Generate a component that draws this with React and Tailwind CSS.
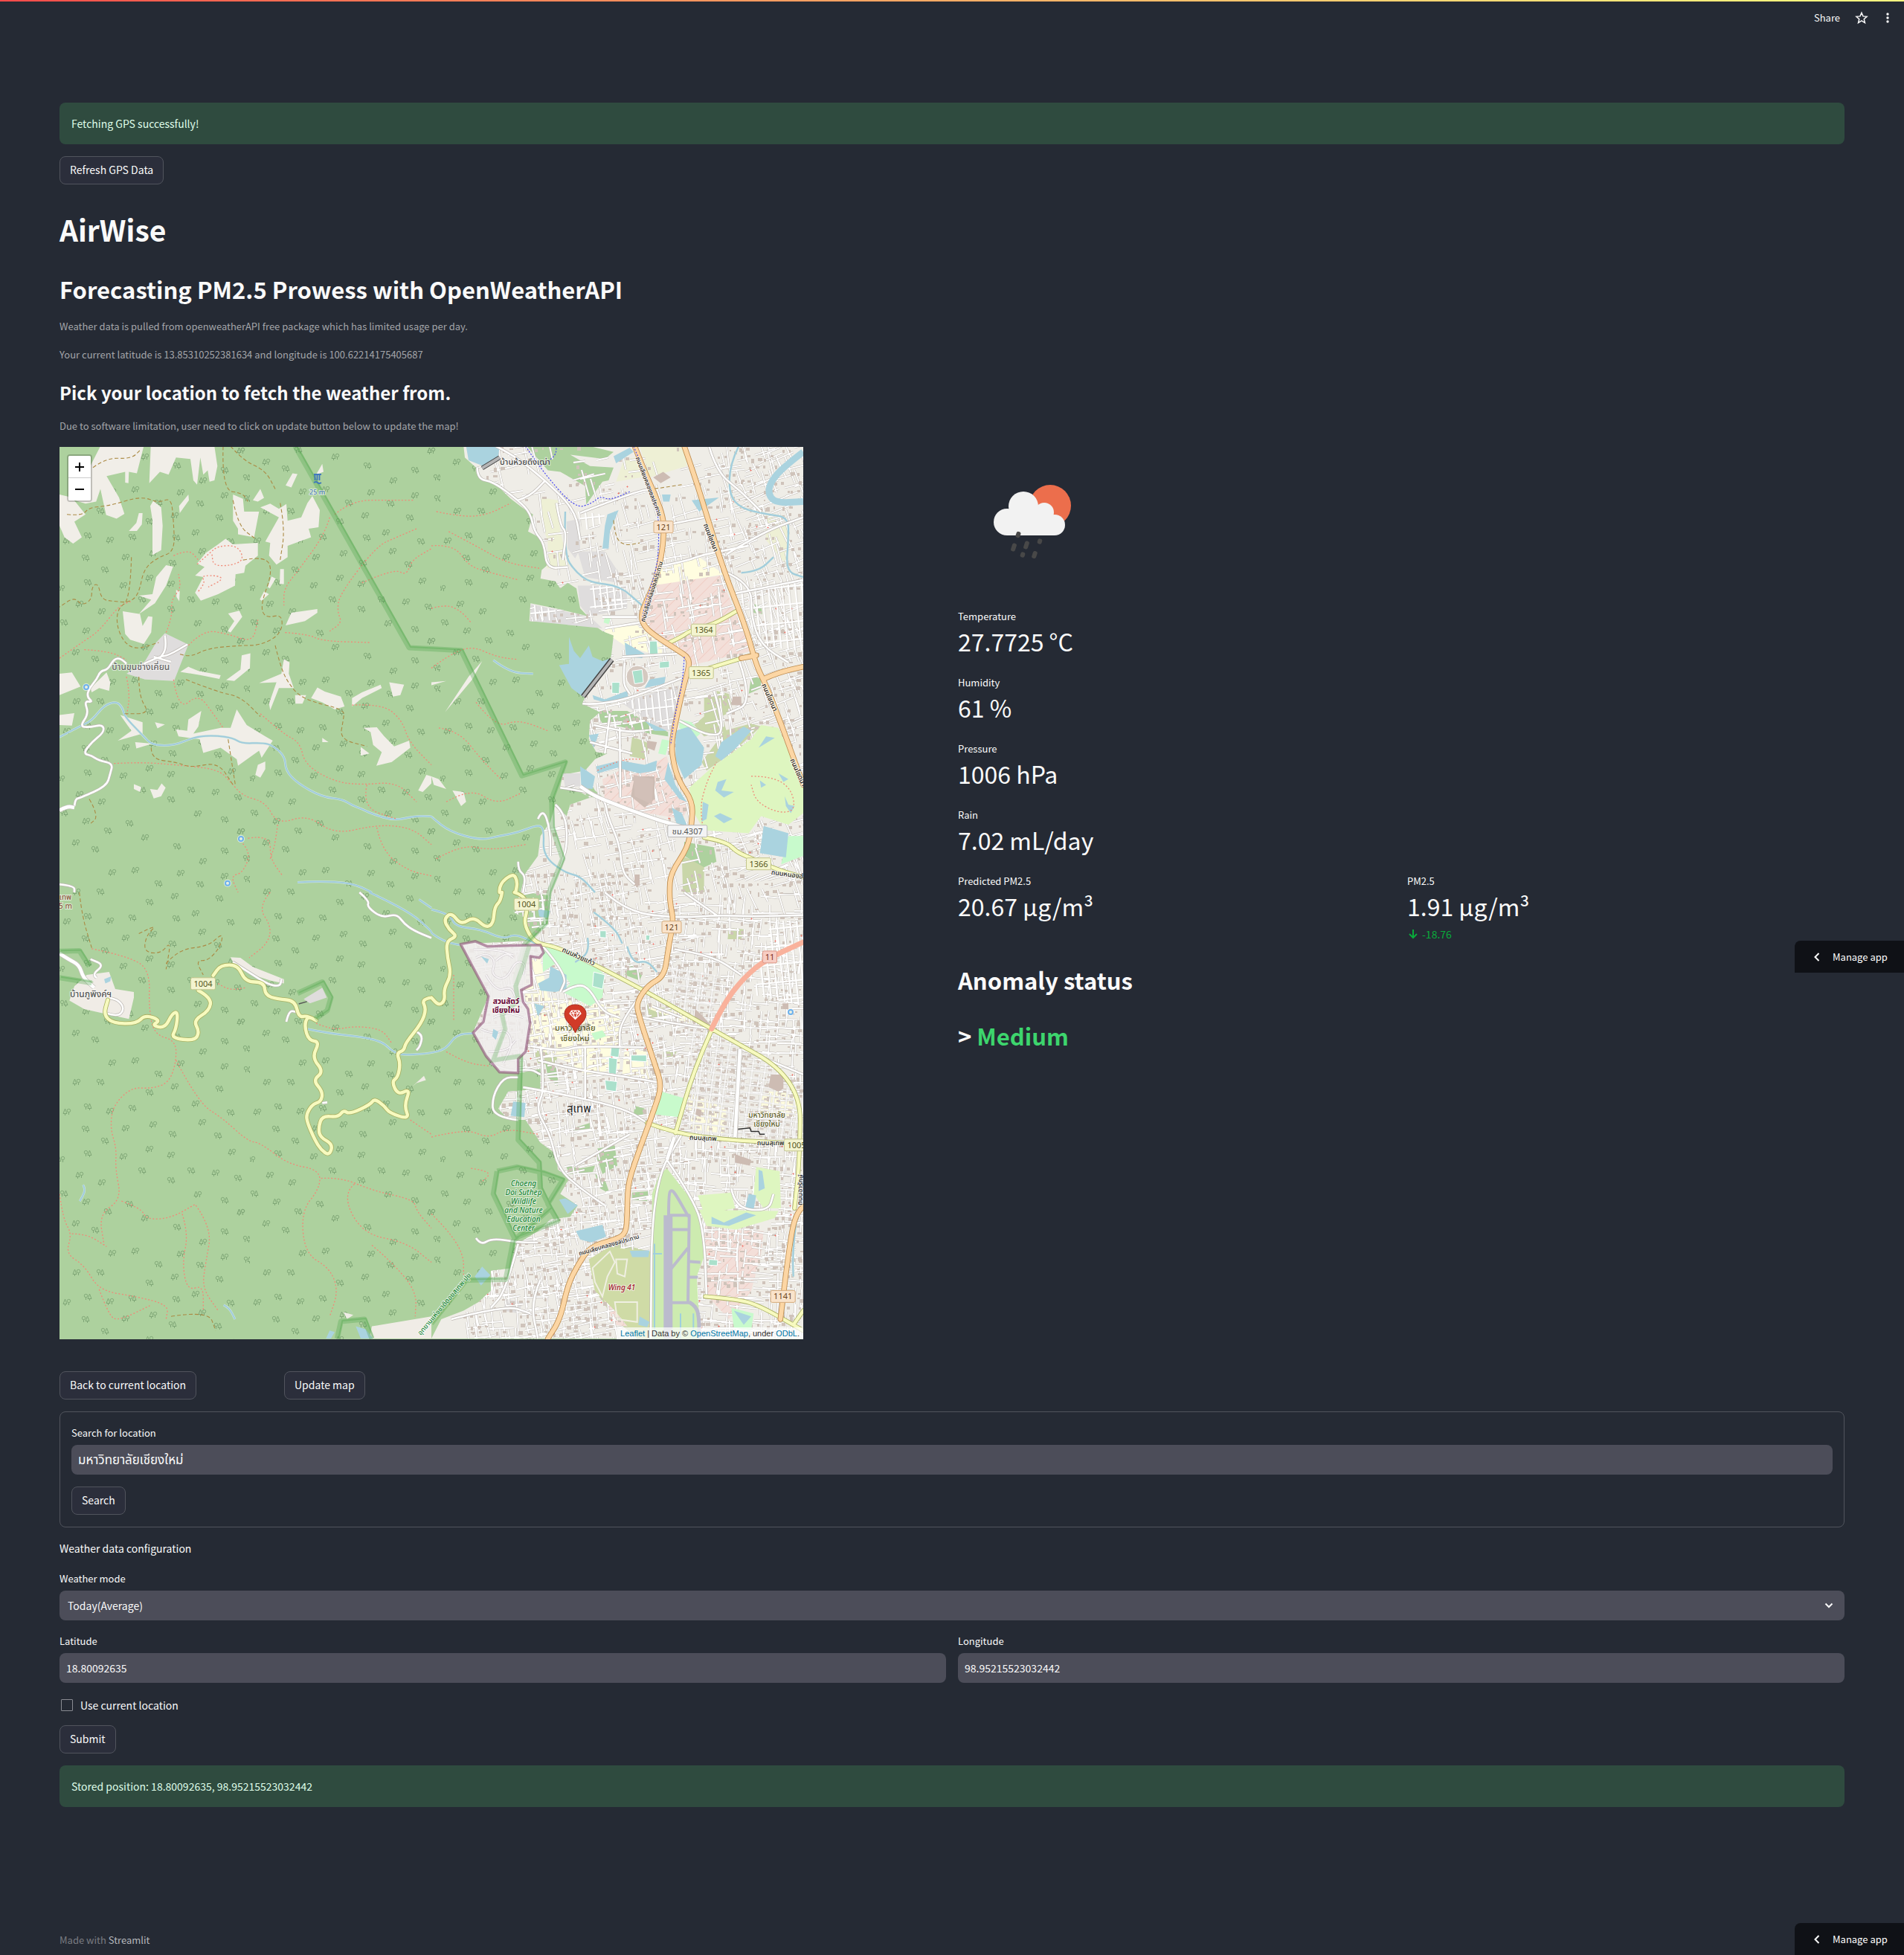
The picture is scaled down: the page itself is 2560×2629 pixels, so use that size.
import { useState } from "react";

/* ---------- map geometry ---------- */

// Map features are surveyed on four sheets; every sheet covers 500 x 600 px of the map.
const SHEETS = { nw: [0, 0], ne: [500, 0], sw: [0, 600], se: [500, 600] };
const toPx = (s, x, y) => [
  Math.round((SHEETS[s][0] + x / 3) * 10) / 10,
  Math.round((SHEETS[s][1] - 1 + y / 2.6133) * 10) / 10,
];

function points(text) {
  let sheet = "nw";
  const out = [];
  for (const t of text.trim().split(/\s+/)) {
    if (SHEETS[t]) sheet = t;
    else {
      const [x, y] = t.split(",").map(Number);
      out.push(toPx(sheet, x, y));
    }
  }
  return out;
}

const poly = (text) =>
  text
    .split("|")
    .map((p) => "M" + points(p).map((c) => c.join(" ")).join("L") + "Z")
    .join("");

const line = (text) =>
  text
    .split("|")
    .map((part) => {
      const p = points(part);
      let d = `M${p[0].join(" ")}`;
      for (let i = 1; i < p.length - 1; i++) {
        const mx = (p[i][0] + p[i + 1][0]) / 2;
        const my = (p[i][1] + p[i + 1][1]) / 2;
        d += `Q${p[i].join(" ")} ${mx} ${my}`;
      }
      return d + `L${p[p.length - 1].join(" ")}`;
    })
    .join("");

const straight = (text) =>
  text
    .split("|")
    .map((p) => "M" + points(p).map((c) => c.join(" ")).join("L"))
    .join("");

const URBAN = poly(
  "ne 130,0 135,40 180,75 195,115 250,125 320,185 380,225 410,240 390,300 435,320 460,360 465,420 445,435 440,465 500,475 520,500 550,480 585,500 600,570 630,597 500,570 400,552 395,615 650,625 690,650 735,665 725,740 620,880 610,905 680,935 640,965 635,1030 665,1075 710,1080 660,1100 620,1140 560,1150 530,1150 520,1200 570,1200 640,1235 560,1260 545,1300 500,1260 480,1320 440,1370 430,1440 380,1500 360,1568 se 360,0 330,70 380,90 410,170 118,182 230,365 168,493 275,632 350,635 440,620 440,690 310,700 270,760 310,800 380,800 440,880 505,920 510,975 560,1000 520,1060 590,1100 560,1140 480,1150 430,1190 340,1240 330,1320 240,1330 240,1400 190,1440 130,1470 40,1500 0,1568 1500,1568 1500,0 ne 1500,1568 1500,0"
);

const CLEARINGS = poly(
  "nw 165,0 340,0 312,95 280,90 278,130 265,128 265,90 190,105 240,180 262,238 230,255 188,242 165,150 148,195 105,202 60,190 130,60|nw 368,0 625,0 637,70 625,120 605,125 598,85 580,100 568,40 555,135 540,120 528,45 470,40 440,100 405,90 362,130|nw 0,170 50,180 105,240 60,265 90,320 55,342 20,320 0,280|nw 335,235 332,275 312,298 280,298 310,270 320,235|nw 378,192 410,215 416,280 410,365 375,383 375,260 366,210|nw 520,170 522,190 485,235 482,210|nw 430,418 458,423 430,490 385,552 320,590 370,540 320,525 375,520 390,460|nw 255,580 325,590 335,632 358,598 375,600 370,655 340,695 285,680 265,660|nw 700,170 740,185 745,230 805,230 785,320 720,310 720,290 700,262|nw 810,150 825,182 800,195 780,190|nw 810,215 850,202 885,220 915,203 920,262 975,250 1000,200 1020,175 1050,225 1045,285 1005,290 1015,320 920,350 920,390 875,416 845,385 850,340 830,335 885,250|nw 590,375 640,345 670,325 700,345 800,340 800,385 750,420 745,445 710,450 708,490 640,520 570,543 547,515 580,460 547,455 585,425 555,412|nw 940,95 960,98 935,145 912,138|nw 1060,62 1065,90 1035,100|nw 890,432 905,432 905,485 888,485|nw 855,458 872,465 848,500 840,495|nw 825,510 845,520 815,543 808,538|nw 680,588 725,578 737,600 690,655 678,650 705,615|nw 935,585 1040,572 1040,585 990,615 912,630|nw 470,505 485,510 483,545 472,530|nw 735,735 770,728 768,780 705,825 672,822 730,785|nw 487,793 520,775 560,790 650,805 645,818 570,805|nw 905,748 928,760 925,800 945,850 885,850 850,928 845,905 875,830 805,832 895,800|nw 950,875 995,875 980,905 952,905|nw 0,800 50,795 85,845 0,875|nw 0,945 60,938 50,982 0,980|nw 125,850 190,795 205,830 200,860 160,850 130,865|nw 715,925 755,980 830,1020 860,1035 815,1095 805,1070 720,1123 715,1100 650,1060 580,1078 565,1030 480,1020 470,995 515,1000 520,960 572,930 560,985 540,1010 650,990 690,990|nw 245,945 335,970 335,1010 235,1035 290,1000|nw 305,1040 375,1045 310,1062|nw 385,970 425,978 395,992|nw 830,1108 830,1135 810,1165 790,1155 800,1120|nw 1015,885 1040,848 1070,862 1135,880 1150,915 1110,925 1060,900|nw 1180,885 1220,865 1295,838 1300,850 1220,885 1180,915|nw 1330,830 1390,838 1375,875 1345,880|nw 1225,990 1280,988 1310,1020 1350,1055 1410,1035 1415,1060 1340,1110 1278,1123 1300,1075 1265,1050 1255,1005|nw 1215,1057 1250,1080 1215,1088|nw 1060,1025 1085,1040 1060,1040|nw 365,1205 395,1208 412,1185 428,1200 410,1230 380,1238|nw 300,1188 330,1198 325,1215 300,1205|nw 1480,1155 1500,1160 1500,1185 1465,1215 1447,1210|ne 205,755 165,820 55,935 150,810|ne 0,830 60,825 0,840|ne 85,1210 130,1215 140,1250 120,1265|ne 0,1160 30,1170 60,1205 10,1190"
);

const VILLAGES = poly(
  "nw 425,657 520,697 462,825 345,820 270,800 345,755 390,690|ne 400,555 640,600 690,640 400,615|ne 590,490 790,490 790,570 690,590 630,595 600,560|ne 545,265 600,255 600,360 580,395 550,360|ne 590,370 700,370 760,450 750,480 620,460|ne 765,900 1000,840 970,1000 930,1000|ne 530,1150 600,1150 600,1195 540,1200|sw 985,375 1060,335 1078,370 1010,390|se 300,1430 370,1440 350,1480 290,1470"
);

const PALE_SITES = poly(
  "sw 60,330 110,290 200,280 225,340 300,350 300,370 280,445 200,430 100,410 40,380|sw 690,228 730,230 780,262 905,305 905,320 850,310 780,290 700,245|sw 1420,685 1470,645 1478,660 1440,670|sw 1145,1475 1185,1485 1160,1500|sw 1260,1525 1500,1490 1500,1568 1250,1568"
);

const WATER = poly(
  "ne 555,670 575,720 600,745 635,700 650,740 690,755 725,745 610,880 565,850 515,770 555,765|ne 780,690 860,730 850,745 785,740|ne 985,1000 1040,985 1100,1060 1090,1120 1020,1170 985,1100|ne 1340,1335 1440,1360 1430,1445 1325,1430|ne 140,0 275,0 270,35 210,70 150,50|ne 710,240 755,225 720,300 715,360 690,360 700,280|ne 600,1125 660,1160 650,1205 605,1200|ne 665,1125 760,1105 860,1120 910,1105 905,1140 840,1150 750,1130 670,1150|ne 650,875 700,890 790,860 795,885 720,905 655,890|ne 880,820 945,810 940,835 860,850|ne 1170,1040 1260,985 1290,1000 1230,1060 1170,1105 1145,1090|ne 635,1015 675,1010 655,1060|ne 735,35 800,5 815,20 745,60|ne 930,170 965,170 960,195 935,195|ne 1050,190 1160,180 1080,230|ne 1155,1180 1190,1170 1170,1210 1220,1215 1180,1235 1145,1210|ne 1095,1250 1118,1260 1110,1310 1090,1320|ne 1140,1300 1165,1290 1215,1310 1180,1325|ne 1350,1020 1385,1025 1320,1060|ne 1400,1150 1440,1170 1420,1180|ne 1325,1175 1350,1190 1330,1200|ne 1425,1230 1440,1260 1465,1265 1450,1290 1430,1265|ne 860,965 950,1000 900,1000|ne 955,1110 985,1190 1030,1250 1000,1240 940,1170|ne 970,1270 1010,1290 1030,1330 990,1330|se 480,260 545,290 545,340 500,350 440,345 430,320 475,300|se 415,390 455,400 430,435|se 330,735 380,740 375,790 320,785|se 583,1190 690,1168 705,1210 645,1230 600,1220|se 515,1080 540,1075 590,1100 550,1130|se 430,60 480,65 470,90 435,85|se 1280,1060 1310,1065 1300,1115 1265,1110|se 205,1315 238,1345 200,1382 175,1350|se 250,480 270,490 260,518 245,505|se 800,1260 880,1258 875,1282 810,1282|se 840,1490 880,1510 870,1528 835,1520|se 1130,1140 1180,1160 1270,1125 1310,1135 1200,1172 1130,1165|se 1220,1470 1290,1490 1260,1520|se 1320,975 1335,980 1345,1040 1320,1050|se 200,225 232,235 225,250|sw 180,305 208,295 205,312 185,320|sw 1195,1525 1235,1535 1265,1568 1215,1568|sw 1090,1540 1110,1545 1095,1568 1075,1568"
);

const STREAMS = line(
  "nw 0,1022 80,985 130,965 180,910 230,897 255,920 262,950 340,1020 372,1050 460,1053 550,1020 630,1017 700,1025 735,1045 820,1042 860,1052 910,1090 912,1140 960,1185 1060,1233 1140,1240 1180,1262 1220,1275 1260,1292 1350,1316 1430,1300 1500,1300 ne 0,1303 75,1355 200,1385 270,1370 350,1358 430,1330 455,1345 450,1440 540,1500 600,1510 660,1568|nw 960,1533 1040,1528 1180,1535 1260,1568|sw 1250,0 1400,60 1500,135 se 0,145 60,175 115,185|sw 1000,480 1080,495 1290,515 1350,565 1400,572 1500,565 se 60,550 100,500 170,495|se 0,60 75,75 95,120 200,130 290,165 340,145 420,180|ne 250,752 315,795 410,800|sw 1450,25 1500,55|sw 95,1028 107,1045 82,1085|sw 662,1450 685,1460 708,1500|se 630,160 640,210 580,245|se 655,70 740,125 770,180|se 790,190 810,250 870,240 910,280|ne 1240,0 1205,60 1200,170 1250,220 1360,240 1440,250 1440,330 1430,440 1500,460|ne 540,230 535,380 580,440 640,480 760,490 850,560|se 1460,1350 1455,1280 1475,1130|ne 1250,445 1320,440 1380,390"
);

const GOLF = poly(
  "ne 1330,980 1400,990 1450,1090 1500,1200 1500,1290 1440,1330 1330,1300 1280,1360 1100,1350 1060,1290 1040,1200 1130,1130 1290,1030|se 1310,965 1405,980 1410,1110 1340,1110 1300,1060|se 1080,1115 1400,1120 1385,1145 1230,1185 1110,1172|se 1075,1065 1210,1055 1225,1110 1100,1130"
);
const MILITARY = poly(
  "ne 890,490 1165,455 1290,720 1050,770 1000,715 855,630 850,580|se 1095,1165 1160,1185 1340,1190 1330,1270 1290,1400 1200,1500 1110,1415|se 680,1400 830,1440 830,1530 740,1520|ne 690,1170 780,1130 820,1150 950,1090 980,1200 1040,1270 1010,1310 870,1290 700,1245"
);
const CREAM = poly(
  "se 400,240 440,230 470,370 640,390 760,400 760,620 620,640 560,600 400,540 395,400 365,350|se 780,540 870,560 880,660 770,640|ne 920,430 1080,390 1180,450 910,490|ne 700,640 830,630 930,700 930,740 780,700 700,655|se 1030,700 1190,760 1180,850 1040,830|se 1320,700 1480,700 1480,790 1330,780|se 870,390 1060,440 1040,460 880,410|nw 445,748 468,748 460,795 440,790"
);
const PARKS = poly(
  "se 450,190 500,190 660,260 700,290 690,370 640,400 530,350 560,320 500,250 450,280|se 930,700 1025,725 1000,790 895,780|ne 1000,960 1050,970 1085,1010 1060,1030 1000,990|ne 930,1030 960,1035 945,1085 915,1080|ne 1440,1370 1500,1370 1500,1440 1410,1470|se 1210,1460 1300,1480 1290,1540 1220,1530|ne 700,600 725,600 715,625 695,620|se 645,495 690,485 705,505 660,520"
);
const PITCHES = poly(
  "se 715,580 750,585 745,640 715,635|se 700,660 750,665 745,700 705,695|se 725,545 760,545 755,580 722,575|se 805,572 868,572 868,595 805,592|ne 880,685 910,685 915,735 880,730|ne 920,758 960,755 960,778 920,780|ne 728,830 760,830 758,870 728,868|ne 810,790 850,785 855,830 820,835|se 655,280 700,290 690,340 650,330|se 1120,1290 1155,1292 1153,1312 1118,1310|se 865,150 882,150 880,168 865,168|se 680,135 705,135 705,160 680,158"
);
const MEADOW = poly(
  "ne 1100,870 1150,880 1190,1000 1100,1020 1060,980 1100,950|ne 1150,860 1200,870 1215,930 1170,950|ne 1180,1000 1290,975 1330,985 1210,1080 1110,1140 1090,1110 1150,1040|ne 810,1020 880,1045 860,1100 800,1090|se 870,395 970,410 940,455 880,440|se 935,560 990,560 975,580 935,578|ne 1010,1440 1100,1470 1100,1568 1015,1568|se 1200,125 1260,130 1250,165 1195,165|se 410,550 510,570 500,610 430,600|se 640,1290 740,1230 880,1262 885,1568 830,1568 740,1500 660,1400"
);
const GROVES = poly(
  "ne 385,0 640,0 735,20 700,45 560,30 640,70 735,75 715,120 690,125 625,205 620,140 520,90 470,85|ne 660,930 790,930 860,965 955,1005 955,1020 880,1010 760,985 690,975|ne 1290,810 1330,815 1330,850 1280,870|ne 1020,1390 1140,1410 1150,1460 1100,1480 1020,1440|ne 1300,555 1330,560 1335,590 1300,585|ne 780,1150 820,1145 800,1190 765,1180|se 800,250 850,290 840,310 780,290|se 540,960 600,970 660,960 650,985 560,990|se 670,900 740,890 750,960 690,990 670,940|se 660,990 700,1010 720,1060 680,1040|se 570,830 640,810 640,830 580,850|se 1100,740 1110,800 1050,830 1070,780|se 810,1055 880,1050 870,1085 810,1080|se 820,750 860,760 850,790 815,785|ne 640,1180 660,1210 700,1240 620,1230|se 380,0 470,10 470,110 400,170 340,160 300,120 330,50|se 460,600 510,620 510,680 470,650"
);
const FARM = poly(
  "ne 445,180 510,190 520,300 555,420 465,430 470,340 440,250|ne 840,0 1030,0 1030,70 880,110|ne 1345,240 1440,280 1435,420 1350,330|nw 330,875 350,880 372,912 360,912 332,890|sw 1260,1525 1500,1490 1500,1568 1270,1568|ne 775,50 840,35 845,110 745,125"
);
const AIRFIELD = poly("se 950,970 1040,1070 1090,1150 1100,1280 1070,1350 1085,1568 888,1568 890,1060 920,990");
const RETAIL = poly(
  "se 1370,640 1420,640 1420,690 1400,700 1360,685|se 1225,920 1290,940 1285,960 1225,950|se 1065,410 1100,440 1130,470 1060,440|ne 820,1160 900,1160 900,1240 860,1270 805,1230|ne 935,90 965,110 925,130 895,110|ne 870,1035 910,1040 900,1070 870,1060|ne 1215,880 1250,880 1250,910 1210,910|se 1415,390 1440,390 1440,410 1420,410|ne 820,1505 840,1505 840,1545 818,1545|se 1070,760 1090,765 1085,790 1065,780"
);
const ZOO = poly(
  "se 118,182 178,172 225,190 320,187 440,185 453,212 435,230 400,225 405,325 362,343 370,385 390,410 398,460 380,560 350,585 350,635 275,632 220,575 168,493 210,455 230,365"
);
const ZOO_PATHS = line(
  "se 180,230 220,210 260,240 240,290 300,310 340,240 380,250 370,290|se 220,290 260,350 320,330 340,370|se 250,440 300,420 370,440|se 200,480 250,500 300,480 330,530 290,600|se 170,200 260,200 330,220|se 230,560 300,560 340,520|se 260,240 300,210 330,230"
);

const PARK_EDGE = straight(
  "nw 950,0 1410,708 1500,712 ne 120,718 365,1158 540,1110 485,1240 488,1340 530,1450 475,1568 se 460,110 375,185 340,300 345,390 285,430 290,480 250,590 360,575 350,870 435,950 440,1040 480,1110 330,1225 300,1360 140,1363 0,1515|se 265,980 345,965 450,985 530,1010 470,1095 510,1155 335,1215 250,1060 265,980|sw 960,355 1060,315 1095,370 1080,415 1030,445|sw 0,207 80,205 120,260|sw 0,300 130,318|sw 1120,1568 1135,1508 1230,1500 1260,1568"
);

const TRAILS_RED = line(
  "nw 430,655 455,600 450,540 490,500 480,450|nw 555,415 600,380 640,350 720,350 745,400 690,420 620,420 615,380|nw 560,510 590,480 570,455 640,455 660,468 600,495|nw 460,385 520,360 560,400|nw 1090,250 1070,310 960,440 905,500 905,560|nw 1110,240 1180,190 1330,190 1430,190|nw 1440,290 1360,320 1280,350 1130,520 1120,580 1140,620 1090,650|nw 1220,480 1350,430 1400,455 1420,400 1500,360|nw 0,745 90,690 160,650 240,560 290,545|nw 100,715 200,720 270,750|nw 520,700 580,645 680,660 780,690 800,610|nw 910,655 1000,660 1060,685 1250,690|nw 270,810 285,870 270,950|nw 460,820 480,930 560,870 620,940 660,990|nw 220,1115 330,1110 470,1120 640,1135 690,1180 740,1230 830,1250 880,1330 1000,1295 1110,1365 1280,1330 1420,1340 1500,1400|nw 810,940 900,1010 970,1040 990,1120 1110,1180 1220,1190 1360,1180 1440,1250|nw 1180,910 1300,905 1380,960 1410,1040 1500,1120|nw 720,1380 775,1420 740,1500 690,1510 720,1568|nw 760,1378 850,1365 850,1450 900,1510|nw 880,1330 870,1400 850,1450|nw 1240,1190 1220,1270 1360,1310|nw 1280,1340 1300,1420 1400,1490 1500,1510|sw 130,198 310,230 365,290 360,400 380,500 470,520 470,600 440,670 370,690 290,685 215,750 205,830 230,900 225,970 250,1080 160,1130 180,1240|sw 470,590 560,740 660,795 760,875 810,880 920,955 1050,975 1050,1040 975,1120 990,1270 1090,1320 1125,1400 1090,1490|sw 640,320 680,345 750,335|sw 850,0 800,50 855,120 840,180 765,230|sw 1035,460 1100,485 1190,470 1300,480 1340,530|sw 1055,1005 1130,1000 1270,1050 1430,1080 1440,1120 1500,1180|sw 1190,1025 1140,1060 1220,1200 1400,1230 1500,1300|sw 1260,1240 1330,1290 1440,1400 1435,1490|sw 0,1060 15,1150 50,1200 25,1270 100,1310 160,1400 310,1420 440,1450 430,1500|sw 50,1200 110,1200 190,1245|sw 250,1085 330,1110 350,1150 450,1145 550,1095|sw 495,1130 520,1200 495,1300 515,1400 580,1380 580,1468|sw 550,1100 615,1180 590,1300 575,1390 640,1470|sw 160,1395 200,1490 240,1505 370,1450|sw 1415,800 1500,850|ne 0,570 60,555 120,580 160,620|ne 20,230 130,250 230,240 320,200|ne 0,350 90,345 150,420 220,440 350,470|ne 70,300 180,350 300,410 440,430|ne 0,780 60,740 160,700 260,740 350,750|ne 180,900 260,990 350,960 470,1000|ne 30,990 110,1000 200,1100 280,1170|ne 60,1250 160,1200 260,1260 360,1220|ne 20,1450 120,1400 240,1420 380,1400|se 0,860 140,830 230,865 300,830 430,850|se 90,290 90,450|se 160,970 250,980 200,1020|se 0,1130 60,1180 130,1270 130,1350|se 60,560 140,600 230,610|ne 1100,1360 1080,1280 1110,1180 1150,1110|ne 1290,1160 1370,1160 1450,1200 1470,1280 1400,1290 1310,1250 1290,1190|ne 670,1140 760,1100 860,1100"
);

const TRAILS_BROWN = line(
  "nw 135,75 190,40 290,45 330,10|nw 30,240 90,245 120,215 200,210 330,175 400,200 450,180 460,260 465,370 400,390 340,430 320,520 280,550 220,545 170,540 155,480 130,495 130,540 90,560 60,530 0,565|nw 290,390 285,540 235,570 230,630 260,690 310,715 400,690|nw 660,0 655,155 740,165 760,195|nw 690,0 740,50 830,85 870,150|nw 700,190 720,280 790,325|nw 890,200 910,290 890,400|nw 740,400 830,385 860,440 810,560 830,605 900,590 895,660 810,700 730,700 600,710 530,740 480,730|nw 320,810 320,880 365,940 260,940|nw 510,820 640,865 730,880 810,950|nw 870,700 890,770 920,830 980,890 1150,925 1145,960 1130,1030 1240,1055|nw 370,1060 370,1100 470,1110 530,1130 640,1110 700,1190|nw 680,1030 700,1140 710,1195|nw 120,1240 160,1300 120,1330|sw 80,0 90,80 130,195|sw 320,145 400,110 350,150 340,210 410,215 450,170 430,270|sw 430,250 480,200 600,190 660,140 650,190 600,240 550,240 580,290|sw 450,1490 600,1470 630,1540|ne 735,260 740,320 780,350 840,340|ne 900,150 1010,135"
);

const WHITE_ROADS = line(
  "nw 270,765 250,745 220,747 195,785 165,790 150,820 120,850 110,880 135,900 100,895 118,940 82,985 120,988 175,978 180,1005 130,1040 95,1080 130,1088 160,1105 215,1115 205,1150 190,1195 85,1235 65,1240 60,1265|nw 340,765 400,740 440,735 515,697|nw 425,665 433,710 405,745|nw 380,740 450,758|nw 0,1540 60,1545 60,1568|sw 1210,0 1250,30 1240,50 1300,90 1360,75 1390,110 1430,135 1500,160|sw 190,425 235,438 262,410 240,380 200,370|sw 150,300 130,290 180,255 125,235|sw 700,245 780,290 845,325 890,330 895,305|sw 1440,490 1465,500 1455,540 1440,555|sw 915,455 925,415 955,420|sw 1060,740 1080,738|ne 185,75 185,115 250,125 350,190 400,235 415,300 455,340 465,430 550,425|ne 260,0 330,30 460,120 580,225 600,330|ne 600,235 820,160 900,150|ne 350,190 400,175 460,120|ne 505,200 520,280 545,300 530,400|ne 700,1080 720,940|ne 655,980 780,1005 860,1000|ne 760,990 762,1235|ne 640,1040 810,1080|ne 520,1200 640,1215 700,1240 710,1300 760,1400 770,1500 820,1540|ne 500,1260 540,1290 550,1400 520,1480|ne 430,1310 450,1270 480,1350 480,1440|ne 610,905 720,912 1010,815|ne 770,740 990,730|ne 780,760 770,830 800,870|ne 350,1460 350,1490 380,1510 370,1568|ne 1140,860 1190,1005 1120,1020 1000,965|ne 1240,750 1300,900 1190,940|ne 1180,440 1290,480 1290,600 1330,700 1440,760|ne 1120,0 1150,90 1250,160 1330,230|ne 930,420 1020,405 1100,380 1280,350|ne 690,600 830,600|ne 700,640 840,620|ne 930,280 1100,250|ne 1210,520 1500,470|ne 1190,380 1340,300 1500,250|se 400,540 520,560 600,540 860,545|se 370,685 540,710 780,760 870,810|se 430,590 560,620 800,650 930,670|se 620,540 620,730|se 440,540 460,690 420,760 480,850 510,970 600,1040 700,1100|se 240,600 300,630 400,620 440,640|se 350,800 250,790 245,720 290,650 350,650|se 950,940 1010,850|se 950,940 890,1040 885,1568|se 950,940 1060,1080 1100,1200 1110,1420|se 1240,550 1230,870|se 700,0 790,70 1000,90 1150,80 1300,85 1500,80|se 1020,0 1150,80|se 980,200 1130,220 1250,290|se 180,1215 200,1240 245,1215 350,1230 430,1230|se 350,1235 300,1400 240,1460|se 440,1360 400,1440 430,1568|se 80,1500 300,1450 400,1480|se 530,350 590,320 640,340 690,420 760,440|se 450,190 550,290 520,350|se 800,430 900,450 1130,480|se 860,345 760,450 760,540|se 580,960 720,890 800,850|se 890,400 1010,440|se 1250,550 1500,640|se 1210,1040 1225,1110 1360,1120 1380,1060"
);

const BROAD_ROADS = line("ne 600,1195 640,1220 700,1245 900,1310 1000,1335 1100,1360|nw 0,1280 30,1265 60,1270|sw 0,215 35,235 80,255 95,300 140,335|se 950,940 980,860|se 1245,550 1225,860");

const YELLOW_ROADS = line(
  "ne 275,1568 272,1540 330,1500 348,1530 340,1568|se 285,0 280,30 255,50 250,110 220,125 170,85 120,115 80,70 50,95 70,130 105,155 60,170 65,230 80,290 50,340 55,380 30,398 0,370|sw 1500,370 1460,375 1480,410 1460,460 1395,530 1390,555 1360,565 1375,600 1365,650 1340,665 1365,712 1415,690 1390,750 1412,798 1330,775 1310,750 1270,725 1255,745 1170,780 1145,765 1125,790 1060,785 1045,825 1050,860 1103,885 1088,925 1055,905 1030,870 1000,810 995,780 1020,745 1055,735 1062,700 1022,660 1066,630 1018,580 1050,525 1005,520 988,470 1000,435 1035,450|sw 1035,450 1000,432 965,440 950,380 880,375 830,362 825,315 750,315 720,255 650,255 620,292|sw 560,345 612,370 605,415 540,450 565,490 545,522 450,512 470,480 478,420 455,425 425,478 372,467 408,450 345,430 310,462 215,460 178,430 195,378|se 335,0 375,10 388,60 372,110 415,178 500,190 650,250 860,345 1130,480 1490,655 1485,950 1465,1110|se 1130,485 1060,620 985,845|se 870,810 985,848 1220,872 1430,880|se 1105,1420 1240,1430 1330,1455 1500,1540|se 1500,1470 1460,1520|ne 1030,805 1100,785 1290,735|ne 960,690 1010,670 1040,650 1140,625 1230,580|ne 1100,1375 1190,1390 1230,1425 1280,1445 1400,1490 1500,1515"
);

const ORANGE_ROADS = line(
  "ne 820,0 860,90 905,175 935,250 938,300 930,380 905,470 870,540 845,590 855,630 900,665 990,715 1042,745 1035,790 1015,850 990,950 968,1040 975,1110 1000,1180 1055,1250 1050,1330 1035,1410 965,1500 960,1568 se 965,50 977,100 955,200 940,295 875,325 828,385 835,430 900,600 930,680 900,760 820,950 792,1030 790,1130 785,1200 740,1220 640,1245 590,1310 550,1380 520,1500 470,1568|ne 1020,0 1060,100 1110,240 1180,440 1270,640 1310,770 1345,830 1400,950 1500,1190|ne 1340,818 1400,795 1500,775|ne 1250,745 1310,735|se 1500,1105 1468,1125 1440,1270 1408,1500"
);
const RED_ROADS = line("se 1130,480 1180,390 1260,300 1350,235 1500,175");
const CANAL = line("ne 815,0 870,110 915,230 918,330 910,430 860,560 850,610|ne 1020,740 1015,830 985,930 965,1050|ne 380,0 440,80 580,220 650,200 680,175 720,190 800,160|ne 440,70 500,40 505,0");

// Minor streets and houses, laid out block by block with a fixed seed.
function buildTown() {
  let seed = 20240517;
  const rnd = () => {
    seed = (seed * 1664525 + 1013904223) % 4294967296;
    return seed / 4294967296;
  };
  let streets = "";
  let houses = "";
  let accents = "";
  for (let y = -4; y < 1204; y += 11) {
    for (let x = 545; x < 1004; x += 11) {
      const dense = y > 720 ? 0.85 : y > 560 ? 0.7 : x > 880 ? 0.65 : x > 690 && y > 100 ? 0.42 : 0.2;
      if (rnd() > dense) continue;
      const tilt = (y > 600 ? (x > 820 ? 0.06 : -0.15) : x > 900 ? -0.35 : -0.2) + (rnd() - 0.5) * 0.22;
      const across = rnd() > 0.5;
      const a = across ? tilt : tilt + Math.PI / 2;
      const len = 12 + rnd() * 28;
      const sx = Math.round(x + rnd() * 5);
      const sy = Math.round(y + rnd() * 5);
      streets += `M${sx} ${sy}l${(Math.cos(a) * len).toFixed(1)} ${(Math.sin(a) * len).toFixed(1)}`;
      if (rnd() > 0.3) {
        const w = 2 + Math.round(rnd() * 4);
        const h = 2 + Math.round(rnd() * 3);
        houses += `M${sx + 4} ${sy + 4}h${w}v${h}h-${w}z`;
        if (rnd() > 0.5) houses += `M${sx - 5} ${sy + 5}h${h}v${w}h-${h}z`;
      }
      if (rnd() > 0.95) accents += `M${sx + 7} ${sy - 3}h1v1h-1z`;
    }
  }
  return { streets, houses, accents };
}
const TOWN = buildTown();

const TREES = [
  [345, 35], [475, 65], [580, 117], [666, 80], [732, 14], [755, 106], [834, 51], [912, 77], [1073, 148],
  [399, 195], [490, 160], [566, 198], [666, 170], [759, 180], [981, 157], [644, 247], [465, 240], [362, 262],
  [838, 225], [932, 225], [549, 300], [471, 320], [576, 367], [690, 333], [798, 330], [1062, 315], [1035, 386],
  [456, 407], [363, 460], [951, 430], [774, 496], [720, 562], [630, 543], [882, 475], [1026, 486], [1101, 535],
  [939, 577], [450, 571], [558, 620], [666, 640], [732, 682], [1050, 653], [876, 645], [882, 310], [972, 327],
  [873, 390], [849, 552], [786, 618], [378, 373], [963, 11], [696, 470], [639, 413], [450, 480], [531, 535],
].map(([x, y], i) => ({
  x: Math.round((x / 3) % 256),
  y: Math.round((y / 2.6133) % 256),
  flip: i % 2 === 1,
}));

function Shield({ at, text, tone = "yellow" }) {
  const [s, x, y] = at;
  const [cx, cy] = toPx(s, x, y);
  const w = text.length * 7 + (text.length > 5 ? 4 : 5);
  const fill = { yellow: "#f3f4d0", orange: "#f9e3cb", red: "#f7cdc3", white: "#f4f4f4" }[tone];
  const edge = { yellow: "#c3c58c", orange: "#d6ac7c", red: "#dd9585", white: "#b8b8b8" }[tone];
  const ink = { yellow: "#56571c", orange: "#6b441a", red: "#7a2c20", white: "#555555" }[tone];
  return (
    <g>
      <rect x={cx - w / 2} y={cy - 8} width={w} height={16} rx={2} fill={fill} stroke={edge} />
      <text x={cx} y={cy + 4} fontSize="11" textAnchor="middle" fill={ink}>
        {text}
      </text>
    </g>
  );
}

function Label({ at, lines, size = 11, fill = "#555", rotate = 0, weight = 500, italic = false, gap = 12 }) {
  const [s, x, y] = at;
  const [cx, cy] = toPx(s, x, y);
  return (
    <g
      transform={`translate(${cx} ${cy}) rotate(${rotate})`}
      fontSize={size}
      fontWeight={weight}
      fontStyle={italic ? "italic" : "normal"}
      textAnchor="middle"
      fill={fill}
      stroke="#ffffff"
      strokeOpacity="0.6"
      strokeWidth="2"
      paintOrder="stroke"
    >
      {lines.map((t, i) => (
        <text key={t} y={i * gap + 4}>
          {t}
        </text>
      ))}
    </g>
  );
}

function Spring({ at }) {
  const [cx, cy] = toPx(...at);
  return (
    <g>
      <circle cx={cx} cy={cy} r="5" fill="#fff" fillOpacity="0.6" />
      <circle cx={cx} cy={cy} r="3" fill="#e8efe2" stroke="#6db1ec" strokeWidth="2" />
    </g>
  );
}

function MapDrawing() {
  return (
    <svg viewBox="0 0 1000 1200" className="block h-full w-full" preserveAspectRatio="xMinYMin slice" role="img" aria-label="Map of Chiang Mai" fontFamily='"Noto Sans", "Noto Sans Thai", "Open Sans", sans-serif'>
      <defs>
        <g id="tree-pair" fill="none" stroke="#7fa676" strokeWidth="1">
          <path d="M-2.500 -4L-5 2.500H0ZM-2.500 2.500V5" />
          <circle cx="2.5" cy="-1.5" r="2.2" />
          <path d="M2.500 .8V4" />
        </g>
        <pattern id="woods" width="256" height="256" patternUnits="userSpaceOnUse">
          {TREES.map((t, i) => (
            <use key={i} href="#tree-pair" transform={`translate(${t.x} ${t.y})${t.flip ? " scale(-1 1)" : ""}`} />
          ))}
        </pattern>
        <pattern id="hatch" width="10" height="10" patternUnits="userSpaceOnUse" patternTransform="rotate(45)">
          <path d="M0 0V10" stroke="#eebcb2" strokeWidth="1" />
        </pattern>
        <pattern id="blocks" width="17" height="10" patternUnits="userSpaceOnUse" patternTransform="rotate(8)">
          <path d="M0 1H17M2 0V10" stroke="#c6c1bb" strokeWidth="2.6" />
          <path d="M0 1H17M2 0V10" stroke="#ffffff" strokeWidth="1.6" />
          <path d="M6 5h5v3h-5z" fill="#d5cac2" />
        </pattern>
        <pattern id="rows" width="9" height="24" patternUnits="userSpaceOnUse" patternTransform="rotate(-6)">
          <path d="M1 0V24M0 1H9" stroke="#c6c1bb" strokeWidth="3" />
          <path d="M1 0V24M0 1H9" stroke="#ffffff" strokeWidth="2" />
        </pattern>
        <clipPath id="town-clip">
          <path d={URBAN} />
        </clipPath>
      </defs>

      <rect width="1000" height="1200" fill="#add19e" />
      <rect width="1000" height="1200" fill="url(#woods)" />
      <path d={CLEARINGS} fill="#f1eee8" />
      <path d={URBAN} fill="#efede7" />
      <path d={PALE_SITES} fill="#f0ece6" />
      <path d={VILLAGES} fill="#dfdddd" />

      <g clipPath="url(#town-clip)">
        <path d={FARM} fill="#eef0d5" />
        <path d={MEADOW} fill="#c9d6a9" />
        <path d={GROVES} fill="#add19e" />
        <path d={CREAM} fill="#fffde0" />
        <path d={MILITARY} fill="#f3dfd9" />
        <path d={MILITARY} fill="url(#hatch)" />
        <path d={TOWN.streets} fill="none" stroke="#bfbab4" strokeWidth="2.8" />
        <path d={TOWN.streets} fill="none" stroke="#ffffff" strokeWidth="1.8" />
        <path d={TOWN.houses} fill="#cfc3ba" />
        <path d={TOWN.accents} stroke="#ef6a5e" fill="none" />
        <path d={poly("se 1010,440 1240,540 1225,860 1000,820 1060,620|se 1250,560 1480,660 1480,870 1240,860|se 960,250 1180,300 1120,460 960,400")} fill="url(#blocks)" />
        <path d={poly("ne 640,490 790,490 790,570 640,570|ne 770,900 990,850 965,1000|ne 1220,480 1500,470 1500,720 1320,700|se 1370,100 1500,100 1500,400 1300,360|ne 590,230 700,240 690,270 610,300|ne 400,555 500,575 500,612 400,612")} fill="url(#rows)" />
        <path d={GOLF} fill="#def6c0" />
        <path d={PARKS} fill="#c8facc" />
        <path d={AIRFIELD} fill="#cdebb0" />
        <path d={RETAIL} fill="#cdbcb3" />
        <path d={poly("se 635,1290 720,1245 800,1255 885,1262 885,1568 830,1568 740,1470 660,1400")} fill="#cfdba6" />
        <path d={poly("se 650,1320 720,1262 740,1300 710,1350 690,1420 660,1370|se 745,1290 790,1290 780,1350 750,1340|se 740,1440 830,1440 830,1510 750,1500")} fill="none" stroke="#f0efe2" strokeWidth="2" />
        <path d={poly("ne 815,1155 895,1170 890,1260 820,1230")} fill="#d2c0b8" />
        <circle cx="777" cy="309" r="15" fill="#d5c9c0" stroke="#fff" />
      </g>

      <path d={STREAMS} fill="none" stroke="#d3e8dc" strokeWidth="3" />
      <path d={STREAMS} fill="none" stroke="#a0cbdd" strokeWidth="2" />
      <path d={WATER} fill="#aad3df" />
      <path d={line("ne 1500,20 1440,60 1380,110 1355,160 1385,200 1500,195")} fill="none" stroke="#aad3df" strokeWidth="9" />
      <path d={PITCHES} fill="#aae0cb" stroke="#fff" />

      <path d={TRAILS_RED} fill="none" stroke="#f08a78" strokeWidth="1.3" strokeDasharray="2 2.5" />
      <path d={TRAILS_BROWN} fill="none" stroke="#ab8a44" strokeWidth="1.1" strokeDasharray="5 3" />

      <g fill="none" stroke="#bbbbcd" strokeLinejoin="round">
        <path d={straight("se 955,1568 955,1135")} strokeWidth="12" />
        <path d={straight("se 955,1135 1040,1135 1035,1440")} strokeWidth="4" />
        <path d={line("se 957,1140 957,1060 968,1045 985,1060 1037,1140")} strokeWidth="4" />
        <path d={straight("se 960,1185 1035,1185|se 965,1325 1035,1250|se 1035,1297 1085,1300|se 1035,1352 1075,1352|se 955,1442 1040,1442")} strokeWidth="4" />
        <path d={line("se 1040,1440 1070,1455 1080,1500 1080,1568")} strokeWidth="5" />
      </g>
      <path d={straight("se 900,1235 900,1568|se 890,1270 930,1270|se 1005,1480 1005,1568|se 1057,1480 1057,1568")} stroke="#9fcfdd" strokeWidth="2" fill="none" />

      <path d={WHITE_ROADS} fill="none" stroke="#bdb8b3" strokeWidth="4" />
      <path d={WHITE_ROADS} fill="none" stroke="#ffffff" strokeWidth="2.6" />
      <path d={BROAD_ROADS} fill="none" stroke="#c4c0bb" strokeWidth="6" />
      <path d={BROAD_ROADS} fill="none" stroke="#ffffff" strokeWidth="4.6" />
      <path d={YELLOW_ROADS} fill="none" stroke="#a9b062" strokeWidth="6" strokeLinecap="round" />
      <path d={YELLOW_ROADS} fill="none" stroke="#f7fabf" strokeWidth="4.4" strokeLinecap="round" />
      <path d={ORANGE_ROADS} fill="none" stroke="#bd8c4f" strokeWidth="7.5" strokeLinecap="round" />
      <path d={ORANGE_ROADS} fill="none" stroke="#fcd6a4" strokeWidth="5.8" strokeLinecap="round" />
      <path d={RED_ROADS} fill="none" stroke="#f9b29c" strokeWidth="7" strokeLinecap="round" />
      <path d={CANAL} fill="none" stroke="#4a4af0" strokeWidth="1.2" strokeDasharray="2 2" />

      <path d={straight("ne 612,880 728,750")} stroke="#444" strokeWidth="7" />
      <path d={straight("ne 612,880 728,750")} stroke="#b5b5b5" strokeWidth="4" />
      <path d={straight("ne 205,77 275,40")} stroke="#444" strokeWidth="6" />
      <path d={straight("ne 205,77 275,40")} stroke="#b5b5b5" strokeWidth="4" />
      <path d={straight("sw 965,392 998,384")} stroke="#555" strokeWidth="1.5" />
      <path d={straight("se 1237,832 1285,828 1290,840 1320,840 1325,850 1345,850")} stroke="#333" strokeWidth="1.5" fill="none" />

      <path d={PARK_EDGE} fill="none" stroke="#4fa64a" strokeOpacity="0.32" strokeWidth="7" strokeLinejoin="round" />
      <path d={PARK_EDGE} fill="none" stroke="#4fa64a" strokeOpacity="0.35" strokeWidth="2" strokeLinejoin="round" transform="translate(2 -1)" />
      <path d={ZOO} fill="#f0edec" fillOpacity="0.85" stroke="#8c4f77" strokeOpacity="0.6" strokeWidth="3.5" strokeLinejoin="round" />
      <path d={ZOO_PATHS} fill="none" stroke="#cfcacd" strokeWidth="3" />
      <path d={ZOO_PATHS} fill="none" stroke="#f8f5f6" strokeWidth="1.8" />
      <path d={poly("se 250,480 270,490 260,518 245,505|se 200,225 232,235 225,250")} fill="#aad3df" />
      <path d={straight("se 395,185 370,260 340,330 350,380 285,430 298,480 250,590 360,575")} fill="none" stroke="#4fa64a" strokeOpacity="0.25" strokeWidth="6" />

      <Spring at={["nw", 108, 847]} />
      <Spring at={["nw", 732, 1380]} />
      <Spring at={["nw", 678, 1536]} />
      <Spring at={["se", 1449, 421]} />
      <path d="M342 37h10M343.500 38v7M346.500 38v7M349.500 38v7M342 48q3-2 5 0t5 0" stroke="#3f78bd" strokeWidth="1.8" fill="none" />
      <Label at={["nw", 1040, 160]} lines={["25 m"]} size={9} fill="#5080b5" />

      <Shield at={["ne", 936, 284]} text="121" tone="orange" />
      <Shield at={["ne", 1098, 646]} text="1364" />
      <Shield at={["ne", 1088, 796]} text="1365" />
      <Shield at={["ne", 1320, 1468]} text="1366" />
      <Shield at={["ne", 1033, 1353]} text="ชม.4307" tone="white" />
      <Shield at={["sw", 579, 321]} text="1004" />
      <Shield at={["se", 383, 42]} text="1004" />
      <Shield at={["se", 969, 122]} text="121" tone="orange" />
      <Shield at={["se", 1365, 227]} text="11" tone="red" />
      <Shield at={["se", 1473, 888]} text="1005" />
      <Shield at={["se", 1418, 1420]} text="1141" tone="orange" />

      <Label at={["nw", 328, 776]} lines={["บ้านขุนช่างเคี่ยน"]} size={12} fill="#666" />
      <Label at={["ne", 378, 56]} lines={["บ้านห้วยตึงเฒ่า"]} fill="#444" />
      <Label at={["sw", 126, 358]} lines={["บ้านภูพิงค์ฯ"]} size={12} fill="#555" />
      <Label at={["sw", 24, 15]} lines={["เทพ", "5 m"]} size={10} fill="#8a5a3c" />
      <Label at={["se", 301, 382]} lines={["สวนสัตว์", "เชียงใหม่"]} size={10} fill="#660033" weight={700} />
      <Label at={["se", 580, 475]} lines={["มหาวิทยาลัย", "เชียงใหม่"]} size={11} fill="#5b5b1c" gap={14} />
      <Label at={["se", 1353, 780]} lines={["มหาวิทยาลัย", "เชียงใหม่"]} size={10} fill="#5b5b1c" />
      <Label at={["se", 595, 764]} lines={["สุเทพ"]} size={15} fill="#222" weight={400} />
      <Label at={["se", 372, 1021]} lines={["Choeng", "Doi Suthep", "Wildlife", "and Nature", "Education", "Center"]} size={10} fill="#21883a" italic />
      <Label at={["se", 768, 1387]} lines={["Wing 41"]} size={10} fill="#a3152c" italic />
      <Label at={["ne", 880, 140]} lines={["ถนนเลียบคลองชลประทาน"]} size={8} fill="#222" rotate={69} />
      <Label at={["ne", 885, 510]} lines={["ถนนเลียบคลองชลประทาน"]} size={8} fill="#222" rotate={-73} />
      <Label at={["ne", 1130, 320]} lines={["ถนนโชตนา"]} size={9} fill="#222" rotate={69} />
      <Label at={["ne", 1367, 882]} lines={["ถนนโชตนา"]} size={9} fill="#222" rotate={66} />
      <Label at={["ne", 1482, 1145]} lines={["ถนนโชตนา"]} size={9} fill="#222" rotate={66} />
      <Label at={["ne", 1443, 1503]} lines={["ถนนหนองฮ่อ"]} size={9} fill="#222" rotate={8} />
      <Label at={["se", 595, 223]} lines={["ถนนห้วยแก้ว"]} size={9} fill="#222" rotate={24} />
      <Label at={["se", 1096, 861]} lines={["ถนนสุเทพ"]} size={9} fill="#222" rotate={3} />
      <Label at={["se", 1368, 879]} lines={["ถนนสุเทพ"]} size={9} fill="#222" />
      <Label at={["se", 1485, 1045]} lines={["ถนนอารักษ์"]} size={9} fill="#222" rotate={-88} />
      <Label at={["se", 715, 1236]} lines={["ถนนเลียบคลองชลประทาน"]} size={8} fill="#222" rotate={-16} />
      <Label at={["se", 50, 1445]} lines={["อุทยานแห่งชาติดอยสุเทพ-ปุย"]} size={9} fill="#21883a" rotate={-50} />

      <g>
        <ellipse cx="703" cy="781" rx="11" ry="4" fill="#000" fillOpacity="0.18" transform="rotate(-30 703 781)" />
        <path d="M693.500 788C690 777 679 773 679 763C679 755 685 750 693.500 750C702 750 708 755 708 763C708 773 697 777 693.500 788Z" fill="#d13b28" stroke="#a92c1e" strokeWidth="1" />
        <path d="M688.500 758H698.500L701 762L693.500 769.500L686 762ZM686 762H701M690.500 762L693.500 769L696.500 762M688.500 758L690.500 762L693.500 758L696.500 762L698.500 758" fill="none" stroke="#fff" strokeWidth="1.2" strokeLinejoin="round" />
      </g>
    </svg>
  );
}

/* ---------- interface ---------- */

function LocationMap() {
  return (
    <div className="relative aspect-[5/6] w-full max-w-[1000px] overflow-hidden bg-[#add19e]">
      <MapDrawing />
      <div className="absolute left-[10px] top-[10px] flex flex-col overflow-hidden rounded border-2 border-black/20 bg-clip-padding">
        <button type="button" aria-label="Zoom in" className="flex size-[30px] items-center justify-center border-b border-[#cccccc] bg-white">
          <svg viewBox="0 0 12 12" className="size-3" stroke="#000" strokeWidth="2"><path d="M6 0V12M0 6H12" /></svg>
        </button>
        <button type="button" aria-label="Zoom out" className="flex size-[30px] items-center justify-center bg-white">
          <svg viewBox="0 0 12 12" className="size-3" stroke="#000" strokeWidth="2"><path d="M0 6H12" /></svg>
        </button>
      </div>
      <p className="absolute bottom-0 right-0 bg-white/70 px-[5px] font-['Liberation_Sans',sans-serif] text-[11px] leading-4 text-[#333333]">
        <a href="#leaflet" className="text-[#0078a8]">Leaflet</a> | Data by © <a href="#osm" className="text-[#0078a8]">OpenStreetMap</a>, under <a href="#odbl" className="text-[#0078a8]">ODbL</a>.
      </p>
    </div>
  );
}

const RAIN = [
  [81, 118, 8], [75, 135, 11], [92, 132, 11], [110, 127, 7], [87, 145, 7], [103, 145, 10],
];

function WeatherIcon() {
  return (
    <svg viewBox="0 0 200 200" className="block size-[200px]" role="img" aria-label="Rain with sun">
      <circle cx="124" cy="79" r="28" fill="#ec6e4c" />
      <g fill="#f2f2f2">
        <circle cx="66" cy="101" r="18" />
        <circle cx="88" cy="80" r="20" />
        <circle cx="116" cy="88" r="13" />
        <circle cx="130" cy="105" r="14" />
        <path d="M66 119V95L75 82H108L124 95L130 119Z" />
      </g>
      <g fill="#484848">
        {RAIN.map(([x, y, h]) => (
          <rect key={`${x}-${y}`} x={x - 3} y={y - h / 2} width="6" height={h} rx="2.500" transform={`rotate(18 ${x} ${y})`} />
        ))}
      </g>
    </svg>
  );
}

function Button({ children }) {
  return (
    <button type="button" className="h-[38px] whitespace-nowrap rounded-lg border border-[#51545d] bg-[#2b2e3b] px-[13px] pb-[2px] text-sm text-[#fafafa]">
      {children}
    </button>
  );
}

function Alert({ children }) {
  return (
    <div role="status" className="rounded-lg bg-[#2f4b3f] p-4 text-sm leading-6 text-[#dffde9]">
      {children}
    </div>
  );
}

function Caption({ children, className }) {
  return <p className={`text-[13px] leading-[22px] text-[#a3a5a9] ${className}`}>{children}</p>;
}

function Metric({ label, value, delta }) {
  return (
    <div className="flex flex-col">
      <span className="text-[13px] leading-[23px]">{label}</span>
      <span className="mb-1.5 text-[32px] leading-[44px]">{value}</span>
      {delta && (
        <span className="flex items-center gap-1 text-sm leading-5 text-[#09ab3b]">
          <svg viewBox="0 0 16 16" className="size-4" fill="none" stroke="currentColor" strokeWidth="2">
            <path d="M8 2V13M3 8L8 13L13 8" />
          </svg>
          {delta}
        </span>
      )}
    </div>
  );
}

function TextField({ id, label, defaultValue, inputClass = "text-sm" }) {
  return (
    <div className="flex flex-col">
      <label htmlFor={id} className="text-[13px] leading-6">{label}</label>
      <input id={id} type="text" defaultValue={defaultValue} className={`mt-1 h-10 w-full rounded-lg bg-[#4c4d59] px-[9px] text-[#fafafa] outline-none ${inputClass}`} />
    </div>
  );
}

function ManageApp({ className }) {
  return (
    <button type="button" className={`absolute right-0 flex h-[43px] w-[147px] items-center gap-[15px] rounded-tl-lg bg-[#0f1116] pl-6 text-[13px] text-white ${className}`}>
      <svg viewBox="0 0 12 12" className="size-3" fill="none" stroke="currentColor" strokeWidth="2"><path d="M8.500 1L3.500 6L8.500 11" /></svg>
      Manage app
    </button>
  );
}

export default function App() {
  const [useCurrent, setUseCurrent] = useState(false);
  return (
    <div className="relative min-h-screen bg-[#252a34] font-['Noto_Sans_CJK_SC','Noto_Sans_Thai',sans-serif] text-[#fafafa]">
      <div className="h-[2px] bg-linear-to-r from-[#ff4b4b] to-[#fffd80]" />
      <header className="flex h-[44px] items-center justify-end gap-5 pr-4 text-[13px]">
        <button type="button">Share</button>
        <button type="button" aria-label="Favorite">
          <svg viewBox="0 0 24 24" className="size-[18px]" fill="none" stroke="currentColor" strokeWidth="2" strokeLinejoin="miter">
            <path d="M12 3l2.700 6.200 6.700.6-5.100 4.400 1.600 6.600L12 17.300l-5.900 3.500 1.600-6.600-5.100-4.400 6.700-.6z" />
          </svg>
        </button>
        <button type="button" aria-label="More options" className="flex w-3 justify-center">
          <svg viewBox="0 0 4 14" className="h-[14px] w-1" fill="currentColor">
            <circle cx="2" cy="2" r="1.700" /><circle cx="2" cy="7" r="1.700" /><circle cx="2" cy="12" r="1.700" />
          </svg>
        </button>
      </header>

      <main className="px-20 pb-[167px] pt-[92px]">
        <Alert>Fetching GPS successfully!</Alert>
        <div className="mt-4 flex"><Button>Refresh GPS Data</Button></div>

        <h1 className="mt-[34px] text-[39px] font-bold leading-[52px]">AirWise</h1>
        <h2 className="mt-[33px] text-[31px] font-semibold leading-[44px]">Forecasting PM2.5 Prowess with OpenWeatherAPI</h2>
        <Caption className="mt-[17px]">Weather data is pulled from openweatherAPI free package which has limited usage per day.</Caption>
        <Caption className="mt-4">Your current latitude is 13.85310252381634 and longitude is 100.62214175405687</Caption>
        <h3 className="mt-[23px] text-[24px] font-semibold leading-[34px]">Pick your location to fetch the weather from.</h3>
        <Caption className="mt-[17px]">Due to software limitation, user need to click on update button below to update the map!</Caption>

        <section className="mt-[17px] grid grid-cols-2 gap-4">
          <LocationMap />
          <div className="flex flex-col gap-4">
            <WeatherIcon />
            <Metric label="Temperature" value="27.7725 °C" />
            <Metric label="Humidity" value="61 %" />
            <Metric label="Pressure" value="1006 hPa" />
            <Metric label="Rain" value="7.02 mL/day" />
            <div className="grid grid-cols-2 gap-4">
              <Metric label="Predicted PM2.5" value="20.67 µg/m³" />
              <Metric label="PM2.5" value="1.91 µg/m³" delta="-18.76" />
            </div>
            <h2 className="mt-[14px] text-[31px] font-semibold leading-[44px]">Anomaly status</h2>
            <h2 className="mt-[15px] text-[31px] font-semibold leading-[44px]">&gt; <span className="text-[#3dd56d]">Medium</span></h2>
          </div>
        </section>

        <div className="mt-[43px] grid grid-cols-8 gap-4">
          <div><Button>Back to current location</Button></div>
          <div><Button>Update map</Button></div>
        </div>

        <form className="mt-4 rounded-lg border border-[#51545d] px-[15px] py-4" onSubmit={(e) => e.preventDefault()}>
          <TextField id="search" label="Search for location" defaultValue="มหาวิทยาลัยเชียงใหม่" inputClass="text-[17px]" />
          <div className="mt-4 flex"><Button>Search</Button></div>
        </form>

        <p className="mt-4 text-sm leading-6">Weather data configuration</p>
        <div className="mt-[17px] flex flex-col">
          <label htmlFor="mode" className="text-[13px] leading-6">Weather mode</label>
          <div className="relative mt-1">
            <select id="mode" className="h-10 w-full appearance-none rounded-lg bg-[#4c4d59] px-[11px] text-sm text-[#fafafa] outline-none">
              <option>Today(Average)</option>
            </select>
            <svg viewBox="0 0 12 12" className="pointer-events-none absolute right-[15px] top-[14px] size-3" fill="none" stroke="currentColor" strokeWidth="2"><path d="M1.500 3.500L6 8L10.500 3.500" /></svg>
          </div>
        </div>
        <div className="mt-4 grid grid-cols-2 gap-4">
          <TextField id="lat" label="Latitude" defaultValue="18.80092635" />
          <TextField id="lon" label="Longitude" defaultValue="98.95215523032442" />
        </div>
        <div className="mt-[18px] flex h-6 items-center gap-[10px] pl-[2px]">
          <input id="current" type="checkbox" checked={useCurrent} onChange={(e) => setUseCurrent(e.target.checked)} className="size-4 appearance-none rounded-[1px] border border-[#8a8c93] checked:bg-[#ff4b4b]" />
          <label htmlFor="current" className="text-sm">Use current location</label>
        </div>
        <div className="mb-4 mt-[15px] flex"><Button>Submit</Button></div>
        <Alert>Stored position: 18.80092635, 98.95215523032442</Alert>
      </main>

      <footer className="px-20 pb-2 text-[13px] leading-6 text-[#7a7c82]">
        Made with <a href="#streamlit" className="text-[#b6b8bd]">Streamlit</a>
      </footer>

      <ManageApp className="top-[1265px]" />
      <ManageApp className="bottom-0" />
    </div>
  );
}
